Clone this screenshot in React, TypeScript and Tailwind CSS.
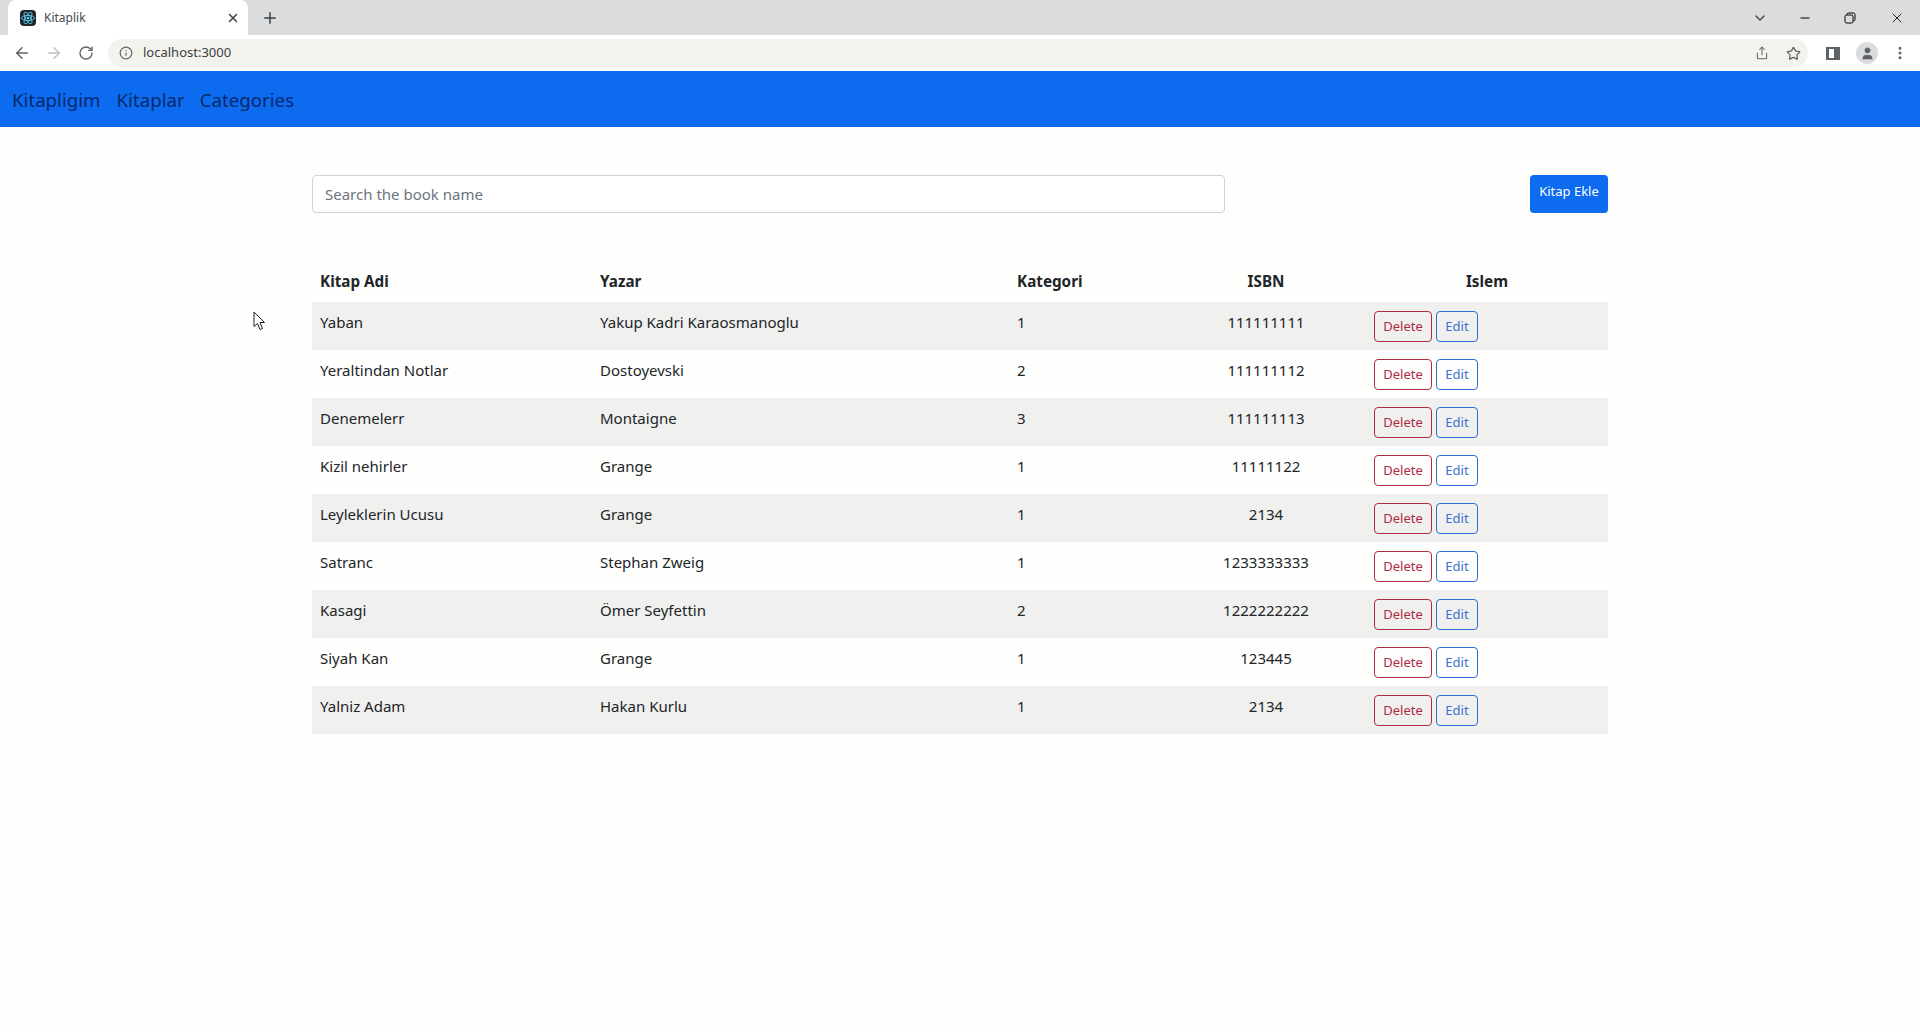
import { ArrowLeft, ArrowRight, RotateCw, Info, Star, Share, X, Plus, ChevronDown, Minus, MoreVertical, User } from "lucide-react";

const books = [
  ["Yaban", "Yakup Kadri Karaosmanoglu", "1", "111111111"],
  ["Yeraltindan Notlar", "Dostoyevski", "2", "111111112"],
  ["Denemelerr", "Montaigne", "3", "111111113"],
  ["Kizil nehirler", "Grange", "1", "11111122"],
  ["Leyleklerin Ucusu", "Grange", "1", "2134"],
  ["Satranc", "Stephan Zweig", "1", "1233333333"],
  ["Kasagi", "Ömer Seyfettin", "2", "1222222222"],
  ["Siyah Kan", "Grange", "1", "123445"],
  ["Yalniz Adam", "Hakan Kurlu", "1", "2134"],
];

function ReactLogo() {
  return (
    <svg width="16" height="16" viewBox="0 0 16 16" className="rounded-sm bg-[#20232a]">
      <g fill="none" stroke="#61dafb" strokeWidth="0.8">
        <ellipse cx="8" cy="8" rx="6.5" ry="2.6" />
        <ellipse cx="8" cy="8" rx="6.5" ry="2.6" transform="rotate(60 8 8)" />
        <ellipse cx="8" cy="8" rx="6.5" ry="2.6" transform="rotate(120 8 8)" />
      </g>
      <circle cx="8" cy="8" r="1.3" fill="#61dafb" />
    </svg>
  );
}

export default function App() {
  return (
    <div className="relative flex min-h-[1032px] flex-col bg-[#fefefc] font-['Noto_Sans','Open_Sans',sans-serif] text-[#212529]">
      {/* Browser tab strip */}
      <div className="flex h-[35px] items-end bg-[#dadcdd] pl-2">
        <div className="flex h-[35px] w-[240px] items-center rounded-t-lg bg-white pl-3 pr-2 text-xs text-[#45474a]">
          <ReactLogo />
          <span className="ml-[8px] flex-1">Kitaplik</span>
          <X size={14} strokeWidth={2.5} className="text-[#3c4043]" />
        </div>
        <Plus size={18} strokeWidth={2} className="mb-2 ml-[13px] text-[#3c4043]" />
        <div className="ml-auto flex h-[35px] items-center">
          <ChevronDown size={16} className="mr-[30px] text-[#3c4043]" />
          <Minus size={14} className="mr-[32px] text-black" />
          <svg width="12" height="12" viewBox="0 0 12 12" fill="none" stroke="black" className="mr-[33px]">
            <rect x="1" y="3" width="8" height="8" rx="1.5" />
            <path d="M3 3V2.500A1.500 1.500 0 0 1 4.500 1H9.500A1.500 1.500 0 0 1 11 2.500V7.500A1.500 1.500 0 0 1 9 9" />
          </svg>
          <X size={16} strokeWidth={1.25} className="mr-[15px] text-black" />
        </div>
      </div>
      {/* Browser toolbar */}
      <div className="flex h-[36px] items-center bg-white pl-[13px] pr-3">
        <ArrowLeft size={18} strokeWidth={2} className="text-[#5f6368]" />
        <ArrowRight size={18} strokeWidth={2} className="ml-[14px] text-[#bdc1c6]" />
        <RotateCw size={16} strokeWidth={2} className="ml-[15px] text-[#5f6368]" />
        <div className="ml-[14px] flex h-[28px] flex-1 items-center rounded-full bg-[#f3f3ee] pl-[11px] pr-[5px] text-[13px] text-[#3c4043]">
          <Info size={14} strokeWidth={2} className="text-[#5f6368]" />
          <span className="ml-[10px]">localhost:3000</span>
          <Share size={14} strokeWidth={1.75} className="ml-auto mr-[17px] text-[#5f6368]" />
          <Star size={15} strokeWidth={2} className="mr-[2px] text-[#5f6368]" />
        </div>
        <div className="ml-[18px] h-[13px] w-[14px] border-y-2 border-l-[3px] border-r-[6px] border-[#5f6368] bg-white" />
        <div className="ml-[16px] flex h-[22px] w-[22px] items-center justify-center rounded-full bg-[#dadce0]">
          <User size={15} fill="#5f6368" strokeWidth={1.5} className="text-[#5f6368]" />
        </div>
        <MoreVertical size={16} strokeWidth={2.5} className="ml-[14px] text-[#5f6368]" />
      </div>

      {/* Navbar */}
      <nav className="flex h-[56px] items-center bg-[#0d6bf0] pl-3 pt-0.5 text-[18.7px] text-[#06296b]">
        <a>Kitapligim</a>
        <a className="ml-[16px]">Kitaplar</a>
        <a className="ml-[15px]">Categories</a>
      </nav>

      {/* Content */}
      <main className="mx-auto w-[1296px] pt-12 text-[15px]">
        <div className="flex items-start justify-between">
          <input
            placeholder="Search the book name"
            className="h-[38px] w-[913px] rounded border border-[#ced4da] bg-white px-3 text-[15px] placeholder:text-[#6c757d]"
          />
          <button className="h-[38px] w-[78px] rounded bg-[#0d6bf0] pb-1 text-[13px] text-white">Kitap Ekle</button>
        </div>
        <table className="mt-[49px] w-full table-fixed border-collapse">
          <colgroup>
            <col className="w-[280px]" />
            <col className="w-[417px]" />
            <col className="w-[157px]" />
            <col className="w-[200px]" />
            <col className="w-[242px]" />
          </colgroup>
          <thead>
            <tr className="h-[40px] text-[15.25px] font-bold">
              <th className="px-2 pb-0.5 text-left">Kitap Adi</th>
              <th className="px-2 pb-0.5 text-left">Yazar</th>
              <th className="px-2 pb-0.5 text-left">Kategori</th>
              <th className="px-2 pb-0.5 text-center">ISBN</th>
              <th className="px-2 pb-0.5 text-center">Islem</th>
            </tr>
          </thead>
          <tbody>
            {books.map((b, i) => (
              <tr key={b[0]} className={i % 2 === 0 ? "h-[48px] bg-[#f0f0ee]" : "h-[48px]"}>
                <td className="px-2 pb-[9px] pt-[9px] align-top">{b[0]}</td>
                <td className="px-2 pb-[9px] pt-[9px] align-top">{b[1]}</td>
                <td className="px-2 pb-[9px] pt-[9px] align-top">{b[2]}</td>
                <td className="px-2 pb-[9px] pt-[9px] text-center align-top">{b[3]}</td>
                <td className="px-2 pb-[8px] pt-[9px] align-top">
                  <div className="flex gap-1">
                    <button className="h-[31px] w-[58px] rounded border border-[#b02a45] text-[13px] text-[#b02a45]">Delete</button>
                    <button className="h-[31px] w-[42px] rounded border border-[#2f6fcf] text-[13px] text-[#3f6fd0]">Edit</button>
                  </div>
                </td>
              </tr>
            ))}
          </tbody>
        </table>
      </main>

      {/* Mouse cursor */}
      <svg width="14" height="20" viewBox="0 0 14 20" className="absolute left-[253px] top-[311px]">
        <path d="M1 1V15.500L4.500 12.500L7 18.500L9.500 17.500L7 11.500H11.500Z" fill="white" stroke="#222" strokeWidth="1" />
      </svg>
    </div>
  );
}
